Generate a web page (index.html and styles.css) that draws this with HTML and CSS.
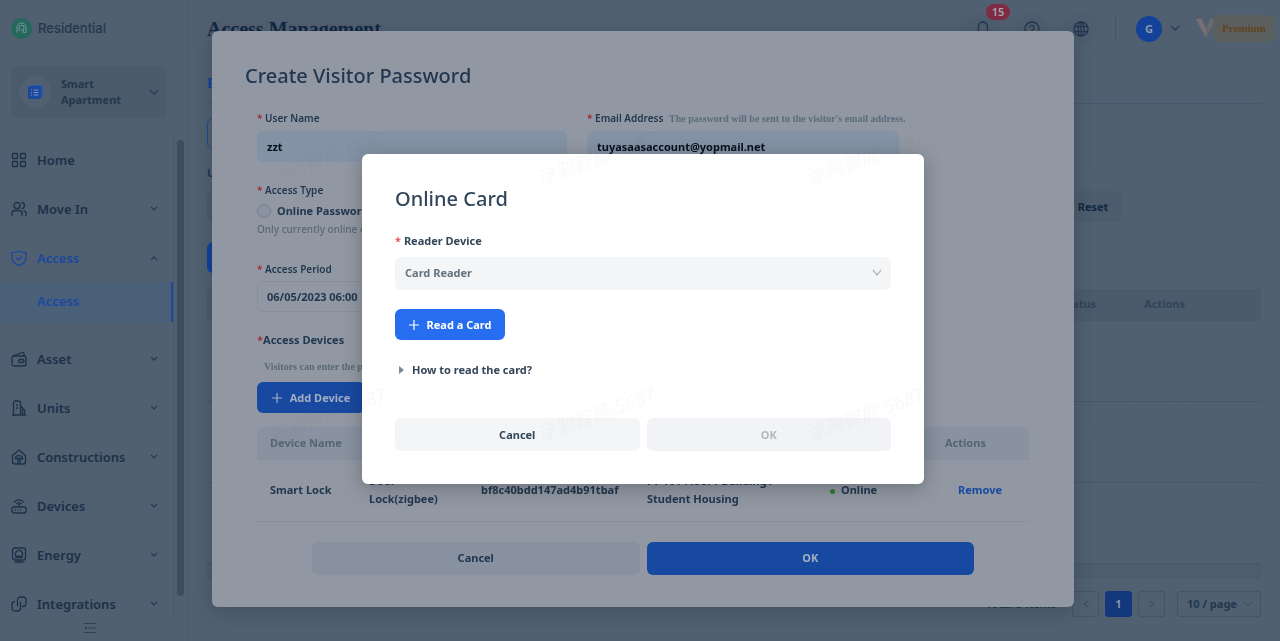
FILE: index.html
```html
<!DOCTYPE html>
<html lang="en">
<head>
    <meta charset="UTF-8">
    <meta name="viewport" content="width=device-width, initial-scale=1.0">
    <title>Access Management</title>
    <link rel="stylesheet" href="styles.css">
</head>
<body>

<div class="page">
    <aside class="sidebar">
        <div class="brand">
            <svg width="21" height="21" viewBox="0 0 21 21" fill="none">
                <circle cx="10.5" cy="10.5" r="10.5" fill="#23695c"/>
                <path d="M6 14.5V9.5a4.5 4.5 0 0 1 9 0v5M8 13V9.7a2.5 2.5 0 1 1 2.5 2.6h-.8M15 14.5h-2.6v-2" stroke="#6f8f94" stroke-width="1.1"/>
            </svg>
            <span>Residential</span>
        </div>
        <button class="project">
            <span class="project-icon">
                <svg width="15" height="15" viewBox="0 0 15 15">
                    <rect x="3" y="0" width="12" height="12" rx="2" fill="#2a58a3"/>
                    <rect x="0" y="1" width="13" height="13" rx="2" fill="#1a48a0"/>
                    <path d="M3 5h1M5.500 5h5M3 7.500h1M5.500 7.500h5M3 10h1M5.500 10h5" stroke="#7f95b5"/>
                </svg>
            </span>
            <span class="project-name">Smart Apartment</span>
            <svg class="chevron" width="10" height="6" viewBox="0 0 10 6"><path d="M1 1l4 4 4-4"/></svg>
        </button>
        <nav class="menu">
            <a href="#" class="menu-item">
                <svg class="icon" viewBox="0 0 16 16"><rect x="1.500" y="1.500" width="5" height="5" rx=".5"/><rect x="9.500" y="1.500" width="5" height="5" rx=".5"/><rect x="1.500" y="9.500" width="5" height="5" rx=".5"/><rect x="9.500" y="9.500" width="5" height="5" rx=".5"/></svg>
                <span>Home</span>
            </a>
            <a href="#" class="menu-item">
                <svg class="icon" viewBox="0 0 16 16"><circle cx="6" cy="4.500" r="3"/><path d="M1 15v-2.500a3 3 0 0 1 3-3h4a3 3 0 0 1 3 3V15M10.500 1.500a3 3 0 0 1 0 6M12.500 9.600a3 3 0 0 1 2.500 3V15"/></svg>
                <span>Move In</span>
                <svg class="chevron" width="8" height="6" viewBox="0 0 8 6"><path d="M1 1l3 3 3-3"/></svg>
            </a>
            <a href="#" class="menu-item active">
                <svg class="icon" viewBox="0 0 16 16"><path d="M8 1c2 1.300 4 1.700 7 1.700V8c0 3.500-3 6-7 7.500C4 14 1 11.500 1 8V2.700C4 2.700 6 2.300 8 1zM5 7.500l2.500 2.500L11 6.500"/></svg>
                <span>Access</span>
                <svg class="chevron" width="8" height="6" viewBox="0 0 8 6"><path d="M1 5l3-3 3 3"/></svg>
            </a>
            <a href="#" class="submenu-item">Access</a>
            <a href="#" class="menu-item">
                <svg class="icon" viewBox="0 0 16 16"><rect x="1" y="5" width="14" height="10" rx="2"/><path d="M2 5l9-3.500c1.500-.5 2 .3 2 1.500v2"/><rect x="7.500" y="8.500" width="5.500" height="3" rx="1.500"/></svg>
                <span>Asset</span>
                <svg class="chevron" width="8" height="6" viewBox="0 0 8 6"><path d="M1 1l3 3 3-3"/></svg>
            </a>
            <a href="#" class="menu-item">
                <svg class="icon" viewBox="0 0 16 16"><path d="M2.500 15V3a2 2 0 0 1 2-2h3a2 2 0 0 1 2 2v12M9.500 6l4 4v5M1 15h14M5 5h2M5 8h2M11.500 9v6"/></svg>
                <span>Units</span>
                <svg class="chevron" width="8" height="6" viewBox="0 0 8 6"><path d="M1 1l3 3 3-3"/></svg>
            </a>
            <a href="#" class="menu-item">
                <svg class="icon" viewBox="0 0 16 16"><path d="M1.500 6.500L8 1l6.500 5.500V13a2 2 0 0 1-2 2h-9a2 2 0 0 1-2-2zM4.500 9.500a3.500 2.800 0 0 1 7 0zM7 9.500V15M9 9.500V15M11 9.500l1 1.500"/></svg>
                <span>Constructions</span>
                <svg class="chevron" width="8" height="6" viewBox="0 0 8 6"><path d="M1 1l3 3 3-3"/></svg>
            </a>
            <a href="#" class="menu-item">
                <svg class="icon" viewBox="0 0 16 16"><rect x="1" y="9" width="14" height="6" rx="2"/><path d="M8 9V6M3 4.500a6 6 0 0 1 10 0M5.500 6a3.300 3.300 0 0 1 5 0M4 12h1M6.500 12h1M9 12h1"/></svg>
                <span>Devices</span>
                <svg class="chevron" width="8" height="6" viewBox="0 0 8 6"><path d="M1 1l3 3 3-3"/></svg>
            </a>
            <a href="#" class="menu-item">
                <svg class="icon" viewBox="0 0 16 16"><rect x="1.500" y="1" width="13" height="12" rx="2"/><path d="M3.500 15h9M5.500 9.500a3.500 3.500 0 1 1 5 0zM4 10.500h8"/></svg>
                <span>Energy</span>
                <svg class="chevron" width="8" height="6" viewBox="0 0 8 6"><path d="M1 1l3 3 3-3"/></svg>
            </a>
            <a href="#" class="menu-item">
                <svg class="icon" viewBox="0 0 16 16"><path d="M6.500 10.500V4a3 3 0 0 1 3-3H12a3 3 0 0 1 3 3v3.500a3 3 0 0 1-3 3h-1M9.500 5.500V12a3 3 0 0 1-3 3H4a3 3 0 0 1-3-3V8.500a3 3 0 0 1 3-3h0"/></svg>
                <span>Integrations</span>
                <svg class="chevron" width="8" height="6" viewBox="0 0 8 6"><path d="M1 1l3 3 3-3"/></svg>
            </a>
            <div class="scroll-track"><div class="scroll-thumb"></div></div>
        </nav>
        <button class="collapse" aria-label="Collapse menu">
            <svg width="12" height="10" viewBox="0 0 12 10"><path d="M0 .5h12M4 5h8M0 9.500h12M2.500 4v2L1 5z"/></svg>
        </button>
    </aside>

    <main class="content">
        <header class="topbar">
            <h1>Access Management</h1>
            <div class="tools">
                <button class="tool" aria-label="Notifications">
                    <svg class="icon" viewBox="0 0 16 16"><path d="M3.500 11V5.500a4.500 4.500 0 0 1 9 0V11M1.500 11.500h13M6.500 14h3M8 0v1"/></svg>
                    <span class="badge">15</span>
                </button>
                <button class="tool" aria-label="Help">
                    <svg class="icon" viewBox="0 0 16 16"><circle cx="8" cy="8" r="7"/><path d="M5.800 6.500a2.200 2.200 0 1 1 3.200 2c-.7.4-1 .8-1 1.500M8 11.500v1"/></svg>
                </button>
                <button class="tool" aria-label="Language">
                    <svg class="icon" viewBox="0 0 16 16"><circle cx="8" cy="8" r="7"/><ellipse cx="8" cy="8" rx="3" ry="7"/><path d="M1.800 5.500h12.400M1.800 10.500h12.400M8 1v14"/></svg>
                </button>
                <span class="divider"></span>
                <button class="account">
                    <span class="avatar">G</span>
                    <svg class="chevron" width="10" height="7" viewBox="0 0 10 7"><path d="M1 1l4 4 4-4"/></svg>
                </button>
                <span class="plan">
                    <svg width="20" height="20" viewBox="0 0 20 20"><path d="M0 0h6l4 10v9z" fill="#776f70"/><path d="M10 19V10l4-10h6z" fill="#686a70"/></svg>
                    <b>Premium</b>
                </span>
            </div>
        </header>
        <section class="records">
            <div class="tabs"><a href="#" class="tab">P</a></div>
            <div class="segment"></div>
            <div class="filters">
                <span class="filter-label">U</span>
                <div class="filter-row">
                    <span class="filter-field"></span>
                    <button class="reset">Reset</button>
                </div>
            </div>
            <div class="create"></div>
            <div class="list">
                <div class="list-head"><span>Status</span><span>Actions</span></div>
                <div class="list-row"></div>
                <div class="list-row"></div>
                <div class="list-row"></div>
                <div class="list-scroll"></div>
            </div>
            <div class="pagination">
                <span>Total 3 items</span>
                <button class="pager" aria-label="Previous page"><svg width="6" height="8" viewBox="0 0 6 8"><path d="M5.500 1L1 4l4.500 3"/></svg></button>
                <button class="pager current">1</button>
                <button class="pager" aria-label="Next page"><svg width="6" height="8" viewBox="0 0 6 8"><path d="M.5 1L5 4 .5 7"/></svg></button>
                <div class="page-size">
                    <select aria-label="Page size"><option>10 / page</option></select>
                    <svg class="chevron" width="10" height="6" viewBox="0 0 10 6"><path d="M1 1l4 4 4-4"/></svg>
                </div>
            </div>
        </section>
    </main>
</div>

<div class="overlay overlay-visitor">
    <section class="modal visitor">
        <h2>Create Visitor Password</h2>
        <form class="visitor-form">
            <div class="fields">
                <div class="field">
                    <label for="userName"><i>*</i> User Name</label>
                    <input type="text" id="userName" class="filled" value="zzt">
                </div>
                <div class="field">
                    <label for="email"><i>*</i> Email Address <small>The password will be sent to the visitor's email address.</small></label>
                    <input type="email" id="email" class="filled" value="tuyasaasaccount@yopmail.net">
                </div>
            </div>
            <div class="field type">
                <span class="label"><i>*</i> Access Type</span>
                <label class="radio"><input type="radio" name="type"> Online Password</label>
                <p>Only currently online devices</p>
            </div>
            <div class="field period">
                <label for="period"><i>*</i> Access Period</label>
                <input type="text" id="period" value="06/05/2023 06:00">
            </div>
            <h3><i>*</i>Access Devices</h3>
            <p class="note">Visitors can enter the password</p>
            <button type="button" class="btn primary add">
                <svg class="plus" viewBox="0 0 10 10"><path d="M5 0v10M0 5h10"/></svg>
                Add Device
            </button>
            <table class="devices">
                <colgroup><col class="c-name"><col class="c-type"><col class="c-id"><col class="c-place"><col class="c-status"><col></colgroup>
                <thead>
                    <tr><th>Device Name</th><th></th><th></th><th></th><th></th><th>Actions</th></tr>
                </thead>
                <tbody>
                    <tr>
                        <td>Smart Lock</td>
                        <td>Door Lock(zigbee)</td>
                        <td>bf8c40bdd147ad4b91tbaf</td>
                        <td>FT-101 Floor1 Building1 Student Housing</td>
                        <td><span class="dot"></span>Online</td>
                        <td><a href="#" class="remove">Remove</a></td>
                    </tr>
                </tbody>
            </table>
            <div class="actions">
                <button type="button" class="btn">Cancel</button>
                <button type="button" class="btn primary">OK</button>
            </div>
        </form>
    </section>
</div>

<div class="overlay overlay-card">
    <section class="modal card">
        <h2>Online Card</h2>
        <label for="reader"><i>*</i> Reader Device</label>
        <div class="select">
            <select id="reader"><option>Card Reader</option></select>
            <svg class="chevron" width="10" height="7" viewBox="0 0 10 7"><path d="M1 1l4 5 4-5"/></svg>
        </div>
        <button class="btn primary read">
            <svg class="plus" viewBox="0 0 10 10"><path d="M5 0v10M0 5h10"/></svg>
            Read a Card
        </button>
        <details>
            <summary><svg width="5" height="8" viewBox="0 0 5 8"><path d="M0 0l5 4-5 4z"/></svg>How to read the card?</summary>
        </details>
        <div class="actions">
            <button class="btn">Cancel</button>
            <button class="btn" disabled>OK</button>
        </div>
    </section>
</div>

<div class="watermark" aria-hidden="true">
    <span>涂鸦智能-5687</span><span>涂鸦智能-5687</span><span>涂鸦智能-5687</span><span>涂鸦智能-5687</span><span>涂鸦智能-5687</span>
    <span>涂鸦智能-5687</span><span>涂鸦智能-5687</span><span>涂鸦智能-5687</span><span>涂鸦智能-5687</span><span>涂鸦智能-5687</span>
</div>

</body>
</html>
```
FILE: styles.css
```css
* {
    box-sizing: border-box;
}

body {
    margin: 0;
    font-family: "Noto Sans", "Noto Sans CJK SC", sans-serif;
    font-size: 11px;
    font-weight: 700;
    line-height: 18px;
    color: #22374f;
    background-color: #506070;
    overflow: hidden;
}

h1, h2, h3, p {
    margin: 0;
}

a {
    color: inherit;
    text-decoration: none;
}

button, input, select {
    font: inherit;
    color: inherit;
    border: none;
    background: none;
    padding: 0;
    margin: 0;
}

select {
    appearance: none;
    width: 100%;
    opacity: 1;
}

i {
    font-style: normal;
    font-weight: 500;
    color: #a3222f;
}

svg {
    flex: none;
}

.icon {
    width: 16px;
    height: 16px;
    fill: none;
    stroke: currentColor;
    stroke-width: 1.3;
}

.chevron {
    fill: none;
    stroke: #263c53;
    stroke-width: 1.3;
}

.page {
    display: flex;
    height: 100vh;
}

/* sidebar */
.sidebar {
    width: 188px;
    flex: none;
    display: flex;
    flex-direction: column;
    border-right: 1px solid #495969;
}

.brand {
    display: flex;
    align-items: center;
    gap: 6px;
    padding: 18px 11px 0;
    font-family: Inter, sans-serif;
    font-weight: 500;
    font-size: 13px;
    line-height: 21px;
}

.project {
    display: flex;
    align-items: center;
    margin: 27px 20px 17px 11px;
    padding: 0 8px;
    height: 52px;
    border-radius: 6px;
    background-color: #4b5b6b;
    text-align: left;
    line-height: 16px;
}

.project-icon {
    display: flex;
    align-items: center;
    justify-content: center;
    width: 32px;
    height: 32px;
    border-radius: 50%;
    background-color: #506070;
}

.project-name {
    flex: 1;
    padding: 0 24px 0 10px;
}

.menu {
    position: relative;
    flex: 1;
    min-height: 0;
    overflow: hidden;
    font-size: 13px;
    font-weight: 600;
    color: #1b3049;
}

.menu-item {
    display: flex;
    align-items: center;
    height: 49px;
    padding: 0 29px 0 11px;
}

.menu-item span {
    flex: 1;
    padding-left: 10px;
}

.active, .submenu-item {
    color: #1a47a0;
}

.submenu-item {
    display: block;
    height: 40px;
    margin: 0 14px 12px 0;
    padding-left: 37px;
    line-height: 38px;
    border-right: 2px solid #1a47a0;
    background-color: #4a5f78;
}

.scroll-track {
    position: absolute;
    top: 2px;
    bottom: 0;
    right: 0;
    width: 14px;
    padding: 3px 3px 20px;
    border-left: 1px solid #495969;
}

.scroll-thumb {
    width: 7px;
    height: 100%;
    border-radius: 4px;
    background-color: #3c4c5b;
}

.collapse {
    height: 25px;
    padding-right: 8px;
}

.collapse svg {
    fill: #2c4056;
    stroke: #2c4056;
}

/* page behind the dialogs */
.content {
    flex: 1;
    padding: 0 19px;
}

.topbar {
    display: flex;
    justify-content: space-between;
    align-items: center;
    height: 57px;
    margin-right: -14px;
}

h1 {
    font-family: "Liberation Serif", serif;
    font-size: 20px;
    color: #132843;
}

.tools {
    display: flex;
    align-items: center;
}

.tool {
    position: relative;
    display: flex;
    align-items: center;
    justify-content: center;
    width: 33px;
    height: 33px;
    margin-right: 16px;
    border-radius: 50%;
    background-color: #4e5e6e;
}

.badge {
    position: absolute;
    top: -8px;
    left: 20px;
    width: 24px;
    height: 16px;
    border-radius: 8px;
    background-color: #7e2b43;
    color: #a9a4b0;
    font-weight: 600;
    line-height: 16px;
}

.divider {
    width: 1px;
    height: 26px;
    margin: 0 20px 0 2px;
    background-color: #43556a;
}

.account {
    display: flex;
    align-items: center;
    gap: 8px;
    margin-right: 16px;
}

.avatar {
    width: 26px;
    height: 26px;
    border-radius: 50%;
    background-color: #13429a;
    color: #8d9bb2;
    line-height: 26px;
}

.plan {
    display: flex;
    align-items: center;
}

.plan b {
    width: 62px;
    margin-left: -3px;
    border-radius: 8px;
    background-color: #5b605f;
    color: #62441f;
    font: bold 11px/27px "Liberation Serif", serif;
    text-align: center;
}

.tabs {
    height: 47px;
    padding-top: 18px;
    border-bottom: 1px solid #45586d;
}

.tab {
    font: bold 14px/18px "Liberation Serif", serif;
    color: #14429a;
}

.segment {
    width: 60px;
    height: 31px;
    margin-top: 14px;
    border: 1px solid #214b94;
    border-radius: 6px;
}

.filters {
    margin-top: 15px;
}

.filter-row {
    display: flex;
    justify-content: space-between;
    margin-top: 9px;
    padding-right: 139px;
}

.filter-field {
    width: 60px;
    border-radius: 6px;
    background-color: #4b5b6b;
}

.reset {
    width: 60px;
    height: 31px;
    padding-left: 2px;
    border-radius: 6px;
    background-color: #4c5c6c;
    color: #132843;
}

.create {
    width: 60px;
    height: 31px;
    margin-top: 20px;
    border-radius: 6px;
    background-color: #13429a;
}

.list {
    margin-top: 16px;
}

.list-head {
    display: flex;
    justify-content: flex-end;
    gap: 48px;
    height: 32px;
    padding-right: 76px;
    line-height: 30px;
    background-color: #4b5b6b;
    color: #2f445a;
}

.list-row {
    height: 81px;
    border-bottom: 1px solid #465666;
}

.list-scroll {
    height: 14px;
    background-color: #4d5d6d;
    border-bottom: 1px solid #485868;
}

.pagination {
    display: flex;
    align-items: center;
    justify-content: flex-end;
    gap: 6px;
    margin-top: 13px;
}

.pagination span {
    margin-right: 10px;
}

.pager, .page-size {
    height: 26px;
    border: 1px solid #435465;
    border-radius: 3px;
}

.pager {
    width: 27px;
}

.pager svg {
    fill: none;
    stroke: #364a5e;
}

.current {
    border-color: #13387c;
    background-color: #13387c;
    color: #8492a8;
}

.page-size {
    display: flex;
    align-items: center;
    width: 84px;
    margin-left: 6px;
    padding: 0 7px 0 9px;
}

.page-size .chevron {
    stroke: #364a5e;
    stroke-width: 1;
}

/* dialogs */
.overlay {
    position: fixed;
    inset: 0;
    display: flex;
    justify-content: center;
    align-items: flex-start;
    padding-left: 6px;
}

.overlay-visitor {
    padding-top: 31px;
}

.overlay-card {
    padding-top: 154px;
}

.modal {
    border-radius: 6px;
}

.modal h2 {
    font-size: 20px;
    font-weight: 500;
    line-height: 28px;
}

.visitor {
    width: 862px;
    padding: 31px 33px 32px;
    background-color: #9198a3;
    box-shadow: 0 4px 20px rgba(0, 0, 0, 0.18);
}

.visitor-form {
    margin: 19px 12px 0;
}

.fields {
    display: grid;
    grid-template-columns: 310px 312px;
    gap: 20px;
}

.field label, .label {
    display: block;
    font-size: 10px;
    font-weight: 600;
    white-space: nowrap;
}

.field small {
    margin-left: 3px;
    font: bold 10px/1 "Liberation Serif", serif;
    color: #5b6b7c;
}

.field input[type="text"], .field input[type="email"] {
    display: block;
    width: 100%;
    height: 31px;
    margin-top: 4px;
    padding: 0 10px;
    border-radius: 6px;
}

.field input.filled {
    background-color: #8392a4;
    color: #06101c;
}

.type {
    margin-top: 19px;
}

.field .radio {
    display: flex;
    align-items: center;
    gap: 6px;
    margin-top: 3px;
    font-size: 11px;
    font-weight: 700;
}

.radio input {
    appearance: none;
    width: 14px;
    height: 14px;
    border: 1px solid #74818f;
    border-radius: 50%;
    background-color: #8a939f;
}

.type p {
    font-size: 10px;
    font-weight: 500;
    color: #5b6877;
}

.period {
    width: 310px;
    margin-top: 22px;
}

.period input[type="text"] {
    margin-top: 3px;
    border: 1px solid #858e9a;
    padding: 0 9px;
}

h3 {
    margin-top: 19px;
    font-size: 11px;
    font-weight: 700;
}

.note {
    margin: 9px 0 6px;
    padding-left: 7px;
    font: bold 10px/18px "Liberation Serif", serif;
    color: #5b6877;
}

.btn {
    height: 33px;
    border-radius: 6px;
    background-color: #8791a0;
}

.primary {
    display: flex;
    align-items: center;
    justify-content: center;
    gap: 8px;
    background-color: #1849a0;
    color: #a3aec2;
}

.plus {
    width: 10px;
    height: 10px;
    stroke: currentColor;
    stroke-width: 1.2;
}

.add {
    width: 108px;
    height: 31px;
}

.devices {
    width: 100%;
    margin-top: 14px;
    border-collapse: collapse;
    table-layout: fixed;
}

.devices th, .devices td {
    padding: 0 13px;
    text-align: left;
    border-bottom: 1px solid #858e9a;
}

.devices th {
    height: 32px;
    background-color: #8892a0;
    color: #566474;
    white-space: nowrap;
}

.devices th:first-child {
    border-top-left-radius: 6px;
}

.devices th:last-child {
    border-top-right-radius: 6px;
}

.devices td {
    height: 62px;
}

.c-name {
    width: 99px;
}

.c-type {
    width: 112px;
}

.c-id {
    width: 166px;
}

.c-place {
    width: 183px;
}

.c-status {
    width: 115px;
}

.dot {
    display: inline-block;
    width: 5px;
    height: 5px;
    margin-right: 6px;
    border-radius: 50%;
    background-color: #2e7d2b;
    vertical-align: middle;
}

.remove {
    margin-left: 13px;
    color: #1849a0;
}

.actions {
    display: grid;
    grid-template-columns: 1fr 1fr;
    gap: 7px;
}

.visitor .actions {
    margin: 20px 55px 0;
}

.card {
    width: 562px;
    padding: 31px 33px 33px;
    background-color: #fff;
    color: #34465a;
    box-shadow: 0 4px 20px rgba(0, 0, 0, 0.25);
}

.card i {
    color: #e5353f;
}

.card > label {
    display: block;
    margin-top: 19px;
}

.select {
    display: flex;
    align-items: center;
    height: 33px;
    margin: 7px 0 19px;
    padding: 0 9px 2px 10px;
    border-radius: 6px;
    background-color: #f4f5f7;
    color: #65727f;
}

.select .chevron {
    stroke: #b4b9c0;
}

.card .btn {
    background-color: #f4f5f7;
}

.card .read {
    width: 110px;
    height: 31px;
    background-color: #266df0;
    color: #fff;
}

details {
    margin: 21px 0 39px;
}

summary {
    display: flex;
    align-items: center;
    gap: 8px;
    padding-left: 4px;
}

summary svg {
    fill: #7d8894;
}

.card .btn:disabled {
    background-color: #f2f3f7;
    color: #b5b9bf;
}

/* slanted text laid over everything */
.watermark {
    position: fixed;
    inset: 0;
    display: grid;
    grid-template-columns: repeat(5, 269px);
    grid-auto-rows: 256px;
    padding: 167px 0 0 4px;
    overflow: hidden;
    pointer-events: none;
    font-size: 19px;
    font-style: italic;
    font-weight: 400;
    color: rgba(90, 90, 90, 0.04);
}

.watermark span {
    justify-self: start;
    height: 24px;
    line-height: 24px;
    white-space: nowrap;
    transform: rotate(-20deg);
    transform-origin: left bottom;
}
```
